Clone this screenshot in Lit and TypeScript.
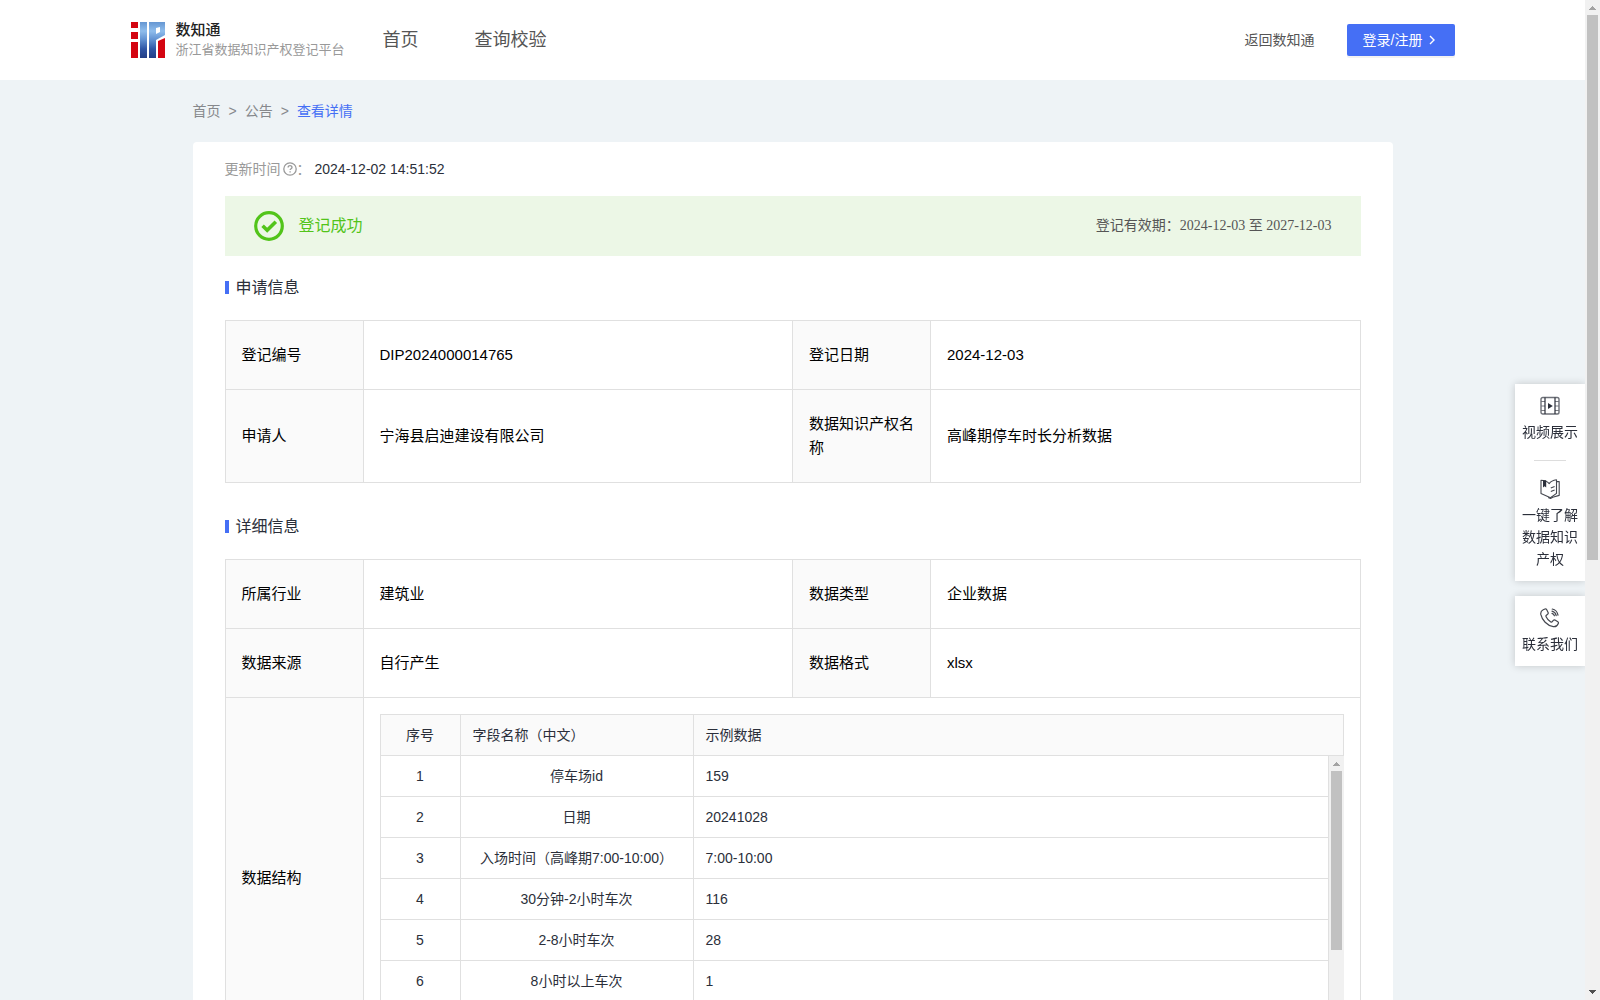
import { LitElement, html, css, svg } from "lit";
import { customElement, property } from "lit/decorators.js";

const base = css`
  * { box-sizing: border-box; }
  a { color: inherit; text-decoration: none; }
  button { font: inherit; cursor: pointer; }
`;

/* Decorative scroll bar that sits beside a scrolling region. */
@customElement("scroll-rail")
export class ScrollRail extends LitElement {
  @property({ type: Number }) share = 50;

  static styles = [base, css`
    :host { display: flex; flex-direction: column; flex: none; width: 15px; background: #f1f1f1; }
    svg { display: block; flex: none; }
    .track { flex: 1; min-height: 0; padding: 0 2px; }
    .thumb { background: #c1c1c1; }
  `];

  render() {
    return html`
      <svg width="15" height="15" viewBox="0 0 15 15" shape-rendering="crispEdges" aria-hidden="true">
        <path fill="#a3a3a3" d="M4 10V9h1V8h1V7h1V6h1v1h1v1h1v1h1v1z" />
      </svg>
      <div class="track"><div class="thumb" style="height:${this.share}%"></div></div>
      <svg width="15" height="15" viewBox="0 0 15 15" shape-rendering="crispEdges" aria-hidden="true">
        <path fill="#505050" d="M4 5v1h1v1h1v1h1v1h1V8h1V7h1V6h1V5z" />
      </svg>`;
  }
}

const logo = svg`
  <svg class="mark" viewBox="0 0 34 36" width="34" height="36" aria-hidden="true">
    <defs>
      <linearGradient id="blue" x1="0" y1="0" x2="0" y2="36" gradientUnits="userSpaceOnUse">
        <stop offset="0" stop-color="#6596d2" />
        <stop offset="0.25" stop-color="#8fbdec" />
        <stop offset="0.5" stop-color="#5f8fd0" />
        <stop offset="0.75" stop-color="#2f55a5" />
        <stop offset="1" stop-color="#233f86" />
      </linearGradient>
    </defs>
    <path fill="#d40511" d="M0 0h7v6H0zM0 10h7v7H0zM0 20h7v16H0zM27 19l7-3v20h-7z" />
    <path fill="url(#blue)" d="M9 0h7v36H9zM18 0h16v13l-9 5v18h-7zM25 6v6l4-2V5z" fill-rule="evenodd" />
  </svg>`;

@customElement("site-header")
export class SiteHeader extends LitElement {
  static styles = [base, css`
    :host { display: block; background: #fff; }
    .bar {
      display: flex;
      align-items: center;
      max-width: 1324px;
      height: 80px;
      margin: 0 auto;
    }
    .brand { display: flex; align-items: center; gap: 11px; }
    .mark { display: block; }
    .name { font-size: 15px; line-height: 20px; font-weight: 500; color: #222; }
    .sub { font-size: 13px; line-height: 20px; color: #999; }
    .nav { display: flex; gap: 56px; margin-left: 38px; font-size: 18px; line-height: 24px; color: #555; }
    .right { display: flex; align-items: center; gap: 32px; margin-left: auto; font-size: 14px; color: #555; }
    .login {
      display: flex;
      align-items: center;
      gap: 4px;
      height: 32px;
      padding: 0 18px 0 16px;
      border: 0;
      border-radius: 2px;
      background: #456ff5;
      color: #fff;
      box-shadow: 0 2px 0 rgba(0, 0, 0, 0.05);
    }
  `];

  render() {
    return html`
      <header class="bar">
        <a class="brand" href="#">
          ${logo}
          <div>
            <div class="name">数知通</div>
            <div class="sub">浙江省数据知识产权登记平台</div>
          </div>
        </a>
        <nav class="nav">
          <a href="#">首页</a>
          <a href="#">查询校验</a>
        </nav>
        <div class="right">
          <a href="#">返回数知通</a>
          <button class="login" type="button">
            登录/注册
            <svg width="10" height="10" viewBox="0 0 10 10" fill="none" stroke="#fff" stroke-width="1.4" aria-hidden="true">
              <path d="M3 1l4 4-4 4" />
            </svg>
          </button>
        </div>
      </header>`;
  }
}

type Field = { order: number; name: string; sample: string };

@customElement("field-table")
export class FieldTable extends LitElement {
  @property({ attribute: false }) rows: Field[] = [];

  static styles = [base, css`
    :host { display: block; font-size: 14px; line-height: 20px; color: #2b2f3a; }
    table { width: 100%; border-collapse: separate; border-spacing: 0; table-layout: fixed; }
    th, td {
      height: 41px;
      padding: 0 12px;
      border-right: 1px solid #e0e0e0;
      border-bottom: 1px solid #e0e0e0;
      font-weight: 400;
      text-align: left;
    }
    .order { width: 80px; }
    .name { width: 233px; }
    .head { border-top: 1px solid #e0e0e0; border-left: 1px solid #e0e0e0; background: #fafafa; }
    .body { display: flex; height: 286px; border-left: 1px solid #e0e0e0; }
    .rows { flex: 1; min-width: 0; overflow-y: auto; scrollbar-width: none; }
    .mid { text-align: center; }
  `];

  render() {
    const cols = html`<colgroup><col class="order" /><col class="name" /><col /></colgroup>`;
    return html`
      <table class="head">
        ${cols}
        <thead>
          <tr><th class="mid">序号</th><th>字段名称（中文）</th><th>示例数据</th></tr>
        </thead>
      </table>
      <div class="body">
        <div class="rows">
          <table>
            ${cols}
            <tbody>
              ${this.rows.map((r) => html`
                <tr><td class="mid">${r.order}</td><td class="mid">${r.name}</td><td>${r.sample}</td></tr>`)}
            </tbody>
          </table>
        </div>
        <scroll-rail share="70"></scroll-rail>
      </div>`;
  }
}

const videoIcon = svg`
  <svg width="20" height="20" viewBox="0 0 20 20" fill="none" aria-hidden="true">
    <path d="M1 5.500h4M1 10h4M1 14.500h4M15 5.500h4M15 10h4M15 14.500h4" stroke="#7b7d84" stroke-width="1.2" />
    <rect x="1" y="1.500" width="18" height="16.500" rx="1.800" stroke="#6d7078" stroke-width="1.4" />
    <path d="M5 1.500V18M15 1.500V18" stroke="#2b2f3a" stroke-width="1.2" />
    <path d="M8 7l4.800 3L8 13z" fill="#2b2f3a" />
  </svg>`;

const bookIcon = svg`
  <svg width="20" height="20" viewBox="0 0 20 20" fill="none" stroke="#44474f" stroke-width="1.1" stroke-linejoin="round" aria-hidden="true">
    <path d="M1 1.200C4 1.200 7 2 9.200 4.600 10.500 2.800 13 1.400 16.500 0.800v13.600L10.500 18.800 1 14.600z" />
    <path d="M16.500 2.600h2.700v13.800l-6.400 1.800-2.300 1.200-2.400-1M10.800 9l3.800-1.600M10.800 12.600l3.800-1.600" />
    <path d="M3 1.200h3.200v7.400L4.600 7.200 3 8.400z" fill="#2b2f3a" stroke="none" />
  </svg>`;

const phoneIcon = svg`
  <svg width="20" height="20" viewBox="0 0 20 20" fill="none" stroke="#44474f" stroke-width="1.2" stroke-linecap="round" stroke-linejoin="round" aria-hidden="true">
    <path d="M3.200 1.800L5 1c.7-.3 1.300 0 1.600.6l1.500 3c.3.700.1 1.300-.5 1.700L6.400 7.200c-.5.400-.6.900-.3 1.500 1 2.200 2.600 4 4.700 5.200.6.300 1.100.2 1.500-.3l1-1.200c.5-.5 1.100-.6 1.700-.3l2.800 1.700c.6.400.8 1 .5 1.600-.9 2.200-2.600 3.600-5 3.200C7 17.600 2 12 .8 6.400.5 4.400 1.500 2.600 3.200 1.800z" />
    <path d="M12 5.400c1.200.4 2 1.200 2.400 2.400M12.200 1c3.200.6 5.200 2.800 5.800 6.200M12 3.200c2.200.5 3.700 2 4.200 4.400" />
  </svg>`;

@customElement("side-tools")
export class SideTools extends LitElement {
  static styles = [base, css`
    :host { display: flex; flex-direction: column; gap: 15px; width: 70px; font-size: 14px; line-height: 22px; color: #2b2f3a; }
    .panel { background: #fff; box-shadow: 0 0 8px rgba(0, 0, 0, 0.18); padding: 12px 6px 11px; clip-path: inset(-12px 0 -12px -12px); }
    .tool { display: flex; flex-direction: column; align-items: center; gap: 5px; text-align: center; }
    .tool svg { display: block; }
    .rule { width: 32px; height: 1px; margin: 17px auto 18px; border: 0; background: #ddd; }
  `];

  render() {
    return html`
      <div class="panel">
        <a class="tool" href="#">${videoIcon}<span>视频展示</span></a>
        <hr class="rule" />
        <a class="tool" href="#">${bookIcon}<span>一键了解数据知识产权</span></a>
      </div>
      <div class="panel">
        <a class="tool" href="#">${phoneIcon}<span>联系我们</span></a>
      </div>`;
  }
}

const FIELDS: Field[] = [
  { order: 1, name: "停车场id", sample: "159" },
  { order: 2, name: "日期", sample: "20241028" },
  { order: 3, name: "入场时间（高峰期7:00-10:00）", sample: "7:00-10:00" },
  { order: 4, name: "30分钟-2小时车次", sample: "116" },
  { order: 5, name: "2-8小时车次", sample: "28" },
  { order: 6, name: "8小时以上车次", sample: "1" },
];

@customElement("app-root")
export class AppRoot extends LitElement {
  static styles = [base, css`
    :host {
      display: flex;
      position: relative;
      height: 100vh;
      font-family: "Liberation Sans", "Noto Sans CJK SC", sans-serif;
      font-size: 14px;
      line-height: 22px;
      color: #2b2f3a;
    }
    .page { flex: 1; min-width: 0; overflow-y: auto; scrollbar-width: none; background: #eef3f6; }
    .main { max-width: 1200px; margin: 0 auto; padding: 20px 0 38px; }
    .crumbs { display: flex; gap: 8px; margin-bottom: 20px; color: #86888c; }
    .crumbs .here { color: #456ff5; }
    .card { min-height: 160vh; padding: 16px 32px; border-radius: 4px; background: #fff; }
    .updated { display: flex; align-items: center; color: #999; }
    .updated svg { margin-left: 2px; }
    .updated time { margin-left: 4px; color: #2b2f3a; }
    .status {
      display: flex;
      align-items: center;
      gap: 15px;
      height: 60px;
      margin: 16px 0 20px;
      padding: 0 29px;
      background: #ecf7e6;
    }
    .done { font-size: 16px; color: #52c41a; }
    .valid { margin-left: auto; color: #555; font-family: "Liberation Serif", "Noto Sans CJK SC", serif; }
    h2 { display: flex; align-items: center; gap: 7px; margin: 0 0 21px; font-size: 16px; line-height: 23px; font-weight: 400; }
    h2::before { content: ""; width: 4px; height: 13px; background: #456ff5; }
    .info { width: 100%; margin-bottom: 32px; border-collapse: collapse; table-layout: fixed; font-size: 15px; line-height: 24px; color: #000; }
    .info th, .info td { padding: 22px 16px; border: 1px solid #e0e0e0; font-weight: 400; text-align: left; }
    .info th { background: #fafafa; }
    .info .nest { padding: 16px; }
    .label { width: 138px; }
    .tools { position: absolute; right: 15px; top: 384px; }
  `];

  render() {
    const cols = html`<colgroup><col class="label" /><col /><col class="label" /><col /></colgroup>`;
    return html`
      <div class="page">
        <site-header></site-header>
        <main class="main">
          <nav class="crumbs">
            <a href="#">首页</a><span>&gt;</span><a href="#">公告</a><span>&gt;</span><a class="here" href="#">查看详情</a>
          </nav>
          <article class="card">
            <div class="updated">
              更新时间
              <svg width="14" height="14" viewBox="0 0 14 14" fill="none" stroke="#999" stroke-width="1.3" aria-hidden="true">
                <circle cx="7" cy="7" r="6.2" />
                <path d="M5.100 5.500c0-2.500 3.900-2.400 3.900-.1 0 1.300-1.900 1.300-1.900 2.700M7.100 9.200v1.300" />
              </svg>：
              <time>2024-12-02 14:51:52</time>
            </div>
            <div class="status">
              <svg width="30" height="30" viewBox="0 0 30 30" fill="none" stroke="#52c41a" aria-hidden="true">
                <circle cx="15" cy="15" r="13.3" stroke-width="3.2" />
                <path d="M8.600 14.800l4.600 4.500 8.600-8.500" stroke-width="3.600" />
              </svg>
              <span class="done">登记成功</span>
              <span class="valid">登记有效期：2024-12-03 至 2027-12-03</span>
            </div>

            <h2>申请信息</h2>
            <table class="info">
              ${cols}
              <tbody>
                <tr><th>登记编号</th><td>DIP2024000014765</td><th>登记日期</th><td>2024-12-03</td></tr>
                <tr><th>申请人</th><td>宁海县启迪建设有限公司</td><th>数据知识产权名称</th><td>高峰期停车时长分析数据</td></tr>
              </tbody>
            </table>

            <h2>详细信息</h2>
            <table class="info">
              ${cols}
              <tbody>
                <tr><th>所属行业</th><td>建筑业</td><th>数据类型</th><td>企业数据</td></tr>
                <tr><th>数据来源</th><td>自行产生</td><th>数据格式</th><td>xlsx</td></tr>
                <tr><th>数据结构</th><td class="nest" colspan="3"><field-table .rows=${FIELDS}></field-table></td></tr>
              </tbody>
            </table>
          </article>
        </main>
      </div>
      <scroll-rail share="56.2"></scroll-rail>
      <side-tools class="tools"></side-tools>`;
  }
}
